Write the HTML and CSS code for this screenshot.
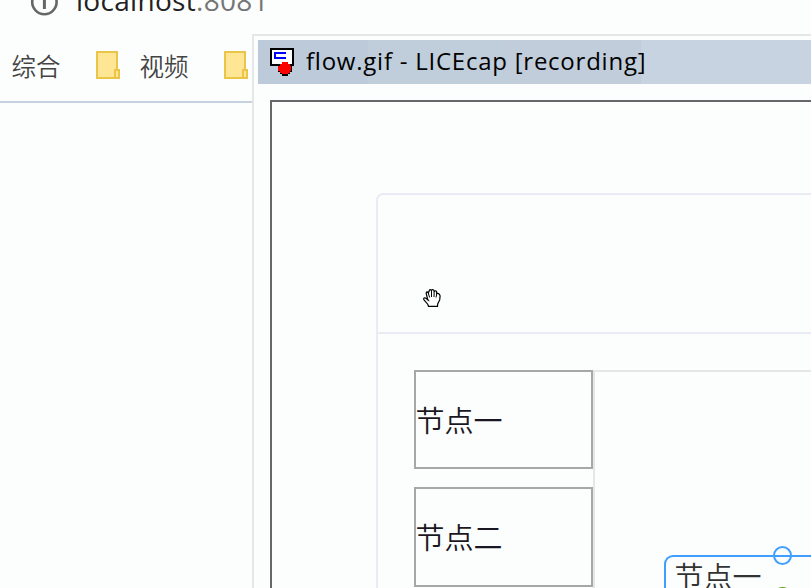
FILE: index.html
```html
<!DOCTYPE html>
<html lang="zh">
<head>
<meta charset="utf-8">
<title>flow</title>
<link rel="stylesheet" href="styles.css">
</head>
<body>
<div class="browser">
  <div class="address">
    <svg class="info" width="28" height="28" viewBox="0 0 28 28"><circle cx="14.4" cy="14" r="12.2" fill="none" stroke="#666" stroke-width="2.6"/><path d="M14.4 12v9" stroke="#666" stroke-width="3"/></svg>
    <div class="url">localhost<span class="port">:8081</span></div>
  </div>
  <div class="bookmarks">
    <span class="bookmark">综合</span>
    <svg class="folder" width="24" height="28" viewBox="0 0 24 28"><path d="M1 1h20v26H1z" fill="#ffe694" stroke="#ebc54a" stroke-width="2"/><path d="M19 19h4v8h-4z" fill="#ffe694" stroke="#ebc54a" stroke-width="2"/></svg>
    <span class="bookmark">视频</span>
    <svg class="folder" width="24" height="28" viewBox="0 0 24 28"><path d="M1 1h20v26H1z" fill="#ffe694" stroke="#ebc54a" stroke-width="2"/><path d="M19 19h4v8h-4z" fill="#ffe694" stroke="#ebc54a" stroke-width="2"/></svg>
  </div>
</div>
<div class="window">
  <div class="titlebar">
    <svg class="app-icon" width="24" height="28" viewBox="0 0 24 28" shape-rendering="crispEdges"><path d="M1 1h22v16H1z" fill="#fff" stroke="#000" stroke-width="2"/><path d="M16 5H5v5h11" fill="none" stroke="#00f" stroke-width="2"/><path d="M8 18h14v6h-2v2h-2v2h-6v-2h-2v-2H8z" fill="#000"/><path d="M12 14h6v2h2v2h1v5h-1v2h-2v1h-6v-1h-2v-2H8v-5h2v-2h2z" fill="#f00"/></svg>
    <span class="title">flow.gif - LICEcap [recording]</span>
  </div>
  <div class="frame">
    <div class="card">
      <div class="card-head"></div>
      <div class="card-body">
        <div class="palette">
          <div class="item">节点一</div>
          <div class="item">节点二</div>
        </div>
        <div class="canvas">
          <div class="node">节点一
            <i class="anchor"></i>
            <i class="status"></i>
          </div>
        </div>
      </div>
    </div>
  </div>
</div>
<svg class="cursor" width="18" height="18" viewBox="0 0 18 18"><path d="M5.5 17.3 4.7 15.2 1 10.8Q.2 9.5 1.2 9q1-.5 1.8.3l1.8 1.5L3.2 4.3q-.1-1.4.9-1.5.8 0 1.2 1L6.2 2q0-1.3 1-1.3t1.3 1.2Q8.6.5 9.8.6t1.4 1.7Q12 1.5 13 2.1t.7 2.5q1.2-.6 2.1.1t1.3 2.1l-.4 4.1-2 4-.2 2.4Z" fill="#fff" stroke="#000" stroke-width="1.2"/><path d="M5.2 3.8 6.6 8.5M8.5 2v6M11.2 2.3 11 8M13.8 4.5 13 8.5M4.8 10.8l1.5 1" fill="none" stroke="#000" stroke-width="1"/></svg>
</body>
</html>
```

FILE: styles.css
```css
* { box-sizing: border-box; }
body {
  margin: 0;
  width: 811px;
  height: 588px;
  overflow: hidden;
  position: relative;
  background: #fcfefe;
  font-family: "Open Sans", "Noto Sans CJK SC", sans-serif;
}
.browser { display: flex; flex-direction: column; }
.address { display: flex; height: 32px; padding-left: 30px; }
.info { flex: none; margin-top: -12px; }
.url {
  margin: -19px 0 0 18px;
  font-size: 28px;
  line-height: 38px;
  letter-spacing: 0.3px;
  color: #222;
  white-space: nowrap;
}
.port { color: #757575; }
.bookmarks {
  display: flex;
  align-items: center;
  height: 71px;
  padding-left: 11.5px;
  border-bottom: 2px solid #c6d1df;
}
.bookmark {
  width: 49px;
  margin-top: -2px;
  font: 24.5px/36px "Noto Sans CJK SC", sans-serif;
  font-weight: 350;
  color: #444;
  white-space: nowrap;
}
.folder { flex: none; margin: -4px 19.5px 0 35.5px; }
.window {
  position: absolute;
  left: 252px;
  top: 34px;
  width: 559px;
  height: 554px;
  padding: 4px 0 0 4px;
  border: solid #e5e6e8;
  border-width: 2px 0 0 2px;
  background: #fcfefe;
  overflow: hidden;
}
.titlebar {
  display: flex;
  height: 44px;
  padding: 8px 0 0 12px;
  background: linear-gradient(90deg, #bccada 0 110px, #c0cedb 110px 248px, #c1cddb 248px 383px, #c7d3e1 383px);
}
.app-icon { flex: none; }
.title {
  margin: -5px 0 0 12px;
  font-size: 24px;
  line-height: 36px;
  letter-spacing: 0.76px;
  color: #000;
  white-space: nowrap;
}
.frame {
  margin: 16px 0 0 12px;
  height: 488px;
  padding: 91px 0 0 104px;
  border: solid #67676b;
  border-width: 2px 0 0 2px;
}
.card {
  height: 395px;
  border: solid #ebebf6;
  border-width: 2px 0 0 2px;
  border-top-left-radius: 7px;
}
.card-head { height: 139px; border-bottom: 2px solid #ebebf6; }
.card-body { display: flex; padding: 36px 0 0 36px; }
.palette { display: flex; flex: none; flex-direction: column; gap: 18px; width: 179px; }
.item {
  height: 99px;
  border: 2px solid #a7a7a7;
  font: 29px/95px "Noto Sans CJK SC", sans-serif;
  font-weight: 350;
  text-indent: -0.5px;
  color: #1b1722;
}
.item + .item { height: 100px; }
.canvas {
  flex: 1;
  height: 218px;
  padding: 183px 0 0 69px;
  border: solid #e6e6e6;
  border-width: 2px 0 0 2px;
}
.node {
  position: relative;
  height: 33px;
  padding-left: 8.5px;
  border: solid #409eff;
  border-width: 2px 0 0 2px;
  border-top-left-radius: 9px;
  font: 29px/37px "Noto Sans CJK SC", sans-serif;
  font-weight: 350;
  color: #333;
}
.anchor {
  position: absolute;
  left: 107px;
  top: -11px;
  width: 19px;
  height: 19px;
  border: 2px solid #409eff;
  border-radius: 50%;
}
.status {
  position: absolute;
  left: 107px;
  top: 30px;
  width: 19px;
  height: 19px;
  border: 2px solid #67a020;
  border-radius: 50%;
}
.cursor { position: absolute; left: 423px; top: 289px; }
```
